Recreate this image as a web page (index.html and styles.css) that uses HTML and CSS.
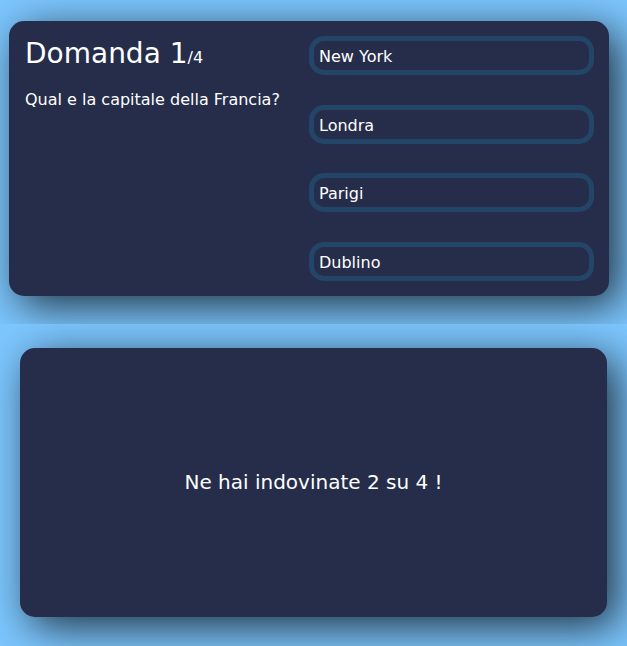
FILE: index.html
```html
<!DOCTYPE html>
<html lang="it">
<head>
<meta charset="utf-8">
<title>Quiz</title>
<link rel="stylesheet" href="styles.css">
</head>
<body>
<section class="screen screen-quiz">
  <div class="app">
    <div class="question-section">
      <div class="question-count"><span>Domanda 1</span>/4</div>
      <div class="question-text">Qual e la capitale della Francia?</div>
    </div>
    <div class="answer-section">
      <button class="answer">New York</button>
      <button class="answer">Londra</button>
      <button class="answer">Parigi</button>
      <button class="answer">Dublino</button>
    </div>
  </div>
</section>
<section class="screen screen-score">
  <div class="app score-section">Ne hai indovinate 2 su 4 !</div>
</section>
</body>
</html>
```
FILE: styles.css
```css
* { box-sizing: border-box; }
html, body {
  margin: 0;
  padding: 0;
  background-color: #7cc6fe;
  font-family: "DejaVu Sans", Verdana, sans-serif;
  line-height: 1.215;
  color: #ffffff;
}
.screen {
  width: 627px;
  overflow: hidden;
  display: flex;
}
.screen-quiz {
  height: 324px;
  padding: 21px 0 0 9px;
}
.screen-score {
  height: 322px;
  padding: 24px 0 0 20px;
}
.app {
  background-color: #252d4a;
  border-radius: 15px;
  box-shadow: 10px 10px 42px 0px rgba(0, 0, 0, 0.75);
  display: flex;
}
.screen-quiz .app {
  width: 600px;
  height: 275px;
  padding: 15px;
}
.question-section {
  width: 285px;
  flex: none;
  padding-top: 1px;
}
.question-count {
  font-size: 16px;
  margin-bottom: 19px;
  padding-left: 1px;
}
.question-count span {
  font-size: 28px;
}
.question-text {
  font-size: 16px;
  padding-left: 1px;
}
.answer-section {
  width: 285px;
  flex: none;
  display: flex;
  flex-direction: column;
  justify-content: space-between;
}
.answer {
  width: 100%;
  font-family: "DejaVu Sans", Verdana, sans-serif;
  font-size: 16px;
  line-height: 1.215;
  color: #ffffff;
  background-color: #252d4a;
  border-radius: 15px;
  display: flex;
  padding: 6px 5px 4px;
  justify-content: flex-start;
  align-items: center;
  border: 5px solid #234668;
  cursor: pointer;
  text-align: left;
}
.score-section {
  width: 587px;
  height: 269px;
  font-size: 20px;
  align-items: center;
  justify-content: center;
}
```
